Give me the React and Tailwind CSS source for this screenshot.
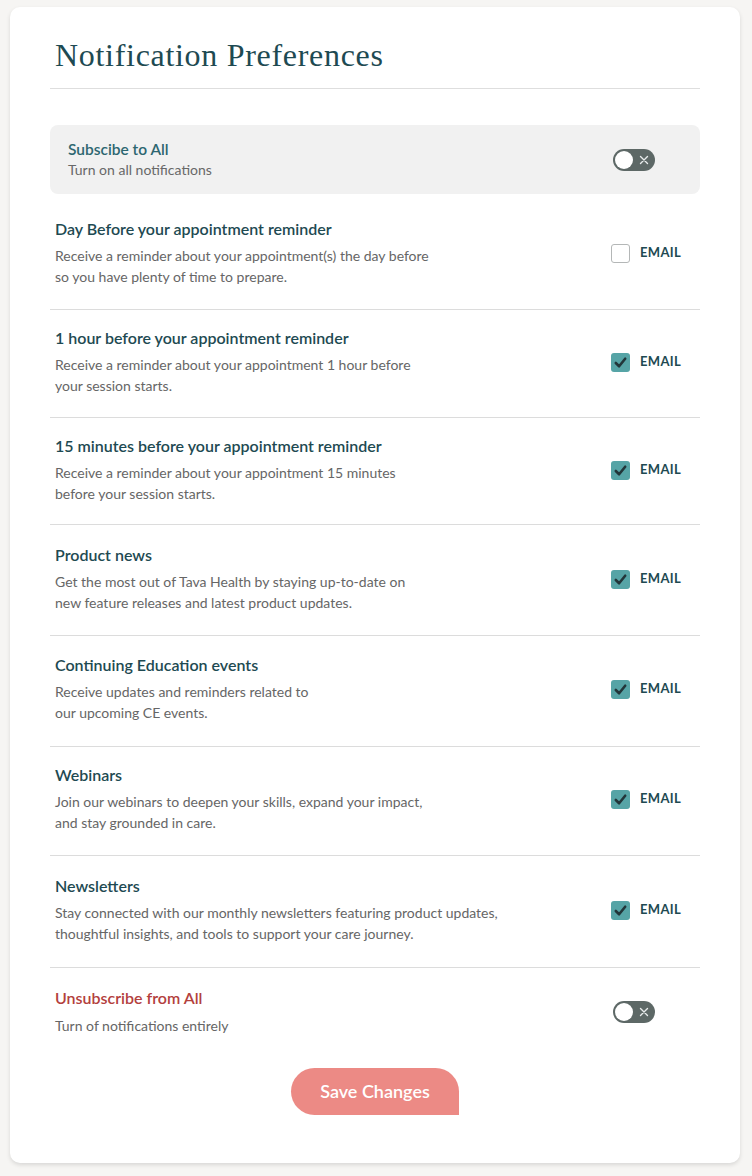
const rows = [
  {
    title: "Day Before your appointment reminder",
    lines: ["Receive a reminder about your appointment(s) the day before", "so you have plenty of time to prepare."],
    checked: false,
    pad: "pt-[25px] pb-[22px]",
  },
  {
    title: "1 hour before your appointment reminder",
    lines: ["Receive a reminder about your appointment 1 hour before", "your session starts."],
    checked: true,
    pad: "pt-[18px] pb-[21px]",
  },
  {
    title: "15 minutes before your appointment reminder",
    lines: ["Receive a reminder about your appointment 15 minutes", "before your session starts."],
    checked: true,
    pad: "pt-[18px] pb-[20px]",
  },
  {
    title: "Product news",
    lines: ["Get the most out of Tava Health by staying up-to-date on", "new feature releases and latest product updates."],
    checked: true,
    pad: "pt-[20px] pb-[22px]",
  },
  {
    title: "Continuing Education events",
    lines: ["Receive updates and reminders related to", "our upcoming CE events."],
    checked: true,
    pad: "pt-[19px] pb-[23px]",
  },
  {
    title: "Webinars",
    lines: ["Join our webinars to deepen your skills, expand your impact,", "and stay grounded in care."],
    checked: true,
    pad: "pt-[18px] pb-[22px]",
  },
  {
    title: "Newsletters",
    lines: ["Stay connected with our monthly newsletters featuring product updates,", "thoughtful insights, and tools to support your care journey."],
    checked: true,
    pad: "pt-[20px] pb-[23px]",
  },
];

const Toggle = () => (
  <div className="w-[42px] h-[22px] rounded-full bg-[#5d6866] flex items-center">
    <div className="ml-[2px] w-[18px] h-[18px] rounded-full bg-white" />
    <svg className="ml-[6px]" width="10" height="10" viewBox="0 0 10 10">
      <path d="M1.5 1.5 L8.5 8.5 M8.5 1.5 L1.5 8.5" stroke="#e8ecec" strokeWidth="1.4" strokeLinecap="round" />
    </svg>
  </div>
);

const Checkbox = ({ checked }) =>
  checked ? (
    <div className="w-[19px] h-[19px] rounded-[3px] bg-[#56a4a6] flex items-center justify-center">
      <svg width="15" height="15" viewBox="0 0 16 16">
        <path d="M3 8.5 L6.5 12 L13 4" fill="none" stroke="#22363a" strokeWidth="2.8" strokeLinecap="round" strokeLinejoin="round" />
      </svg>
    </div>
  ) : (
    <div className="w-[19px] h-[19px] rounded-[3px] bg-white border-[1.5px] border-[#b4b7b7]" />
  );

export default function App() {
  return (
    <div className="min-h-[1176px] bg-[#f6f5f3] pt-[7px] pl-[10px] pr-[12px] font-['Lato','Liberation_Sans',sans-serif]">
      <div className="w-[730px] bg-white rounded-[10px] shadow-[0_2px_4px_rgba(0,0,0,0.12)] px-[40px] pt-[30px] pb-[48px]">
        <h1 className="font-['Liberation_Serif','DejaVu_Serif',serif] text-[32px] leading-[36px] text-[#1e4a52] pl-[5px] tracking-[0.7px]">
          Notification Preferences
        </h1>
        <div className="mt-[15px] border-t border-[#dedede]" />

        <div className="mt-[36px] bg-[#f1f1f1] rounded-[8px] h-[69px] pl-[18px] pr-[45px] flex items-center justify-between">
          <div>
            <div className="text-[15.5px] leading-[20px] font-semibold text-[#2d6670]">Subscibe to All</div>
            <div className="text-[14px] leading-[21px] text-[#686868]">Turn on all notifications</div>
          </div>
          <Toggle />
        </div>

        {rows.map((row) => (
          <div
            key={row.title}
            className={`flex items-center justify-between pl-[5px] pr-[19px] border-b border-[#dcdcdc] ${row.pad}`}
          >
            <div>
              <div className="text-[16px] leading-[20px] font-semibold text-[#1e4a52]">{row.title}</div>
              <div className="mt-[6px] text-[14px] leading-[21px] text-[#666666]">
                {row.lines[0]}
                <br />
                {row.lines[1]}
              </div>
            </div>
            <div className="flex items-center gap-[10px]">
              <Checkbox checked={row.checked} />
              <span className="text-[13px] font-bold tracking-[0.3px] text-[#1e4a52]">EMAIL</span>
            </div>
          </div>
        ))}

        <div className="flex items-center justify-between pl-[5px] pr-[45px] pt-[20px]">
          <div>
            <div className="text-[16px] leading-[20px] font-semibold text-[#b3403d]">Unsubscribe from All</div>
            <div className="mt-[7px] text-[14px] leading-[21px] text-[#666666]">Turn of notifications entirely</div>
          </div>
          <Toggle />
        </div>

        <div className="mt-[32px] flex justify-center">
          <button className="w-[168px] h-[47px] bg-[#ec8a85] text-white text-[18px] font-semibold rounded-tl-[24px] rounded-bl-[24px] rounded-tr-[24px] rounded-br-none">
            Save Changes
          </button>
        </div>
      </div>
    </div>
  );
}
